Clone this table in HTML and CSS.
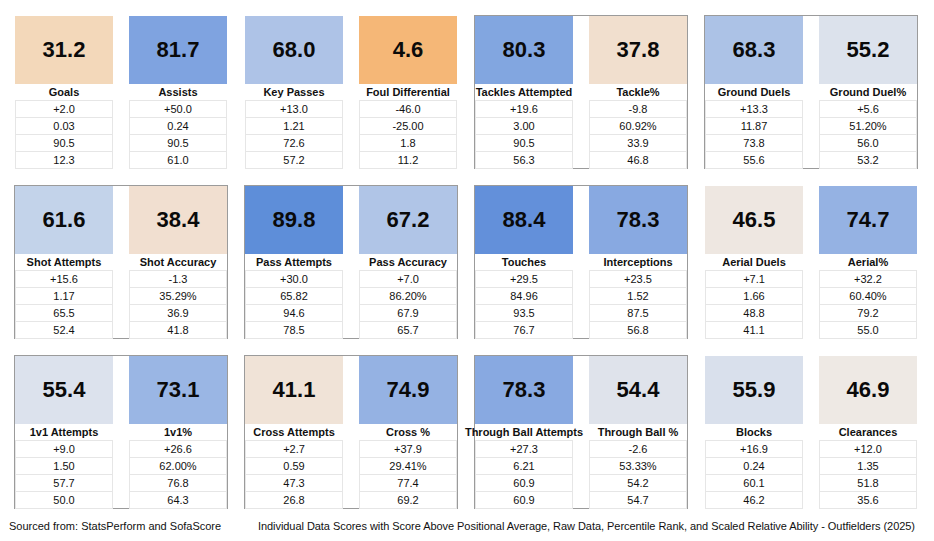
FILE: index.html
```html
<!DOCTYPE html>
<html>
<head>
<meta charset="utf-8">
<link rel="stylesheet" href="styles.css">
</head>
<body>
<div class="page">
  <div class="grid">
    <div class="group">
      <div class="stat"><div class="score c-3121">31.2</div><div class="label">Goals</div><div class="table"><div class="cell">+2.0</div><div class="cell">0.03</div><div class="cell">90.5</div><div class="cell">12.3</div></div></div>
      <div class="stat"><div class="score c-817">81.7</div><div class="label">Assists</div><div class="table"><div class="cell">+50.0</div><div class="cell">0.24</div><div class="cell">90.5</div><div class="cell">61.0</div></div></div>
    </div>
    <div class="group">
      <div class="stat"><div class="score c-680">68.0</div><div class="label">Key Passes</div><div class="table"><div class="cell">+13.0</div><div class="cell">1.21</div><div class="cell">72.6</div><div class="cell">57.2</div></div></div>
      <div class="stat"><div class="score c-46">4.6</div><div class="label">Foul Differential</div><div class="table"><div class="cell">-46.0</div><div class="cell">-25.00</div><div class="cell">1.8</div><div class="cell">11.2</div></div></div>
    </div>
    <div class="group framed">
      <div class="stat"><div class="score c-803">80.3</div><div class="label">Tackles Attempted</div><div class="table"><div class="cell">+19.6</div><div class="cell">3.00</div><div class="cell">90.5</div><div class="cell">56.3</div></div></div>
      <div class="stat"><div class="score c-378">37.8</div><div class="label">Tackle%</div><div class="table"><div class="cell">-9.8</div><div class="cell">60.92%</div><div class="cell">33.9</div><div class="cell">46.8</div></div></div>
    </div>
    <div class="group framed">
      <div class="stat"><div class="score c-683">68.3</div><div class="label">Ground Duels</div><div class="table"><div class="cell">+13.3</div><div class="cell">11.87</div><div class="cell">73.8</div><div class="cell">55.6</div></div></div>
      <div class="stat"><div class="score c-552">55.2</div><div class="label">Ground Duel%</div><div class="table"><div class="cell">+5.6</div><div class="cell">51.20%</div><div class="cell">56.0</div><div class="cell">53.2</div></div></div>
    </div>

    <div class="group framed">
      <div class="stat"><div class="score c-616">61.6</div><div class="label">Shot Attempts</div><div class="table"><div class="cell">+15.6</div><div class="cell">1.17</div><div class="cell">65.5</div><div class="cell">52.4</div></div></div>
      <div class="stat"><div class="score c-384">38.4</div><div class="label">Shot Accuracy</div><div class="table"><div class="cell">-1.3</div><div class="cell">35.29%</div><div class="cell">36.9</div><div class="cell">41.8</div></div></div>
    </div>
    <div class="group framed">
      <div class="stat"><div class="score c-898">89.8</div><div class="label">Pass Attempts</div><div class="table"><div class="cell">+30.0</div><div class="cell">65.82</div><div class="cell">94.6</div><div class="cell">78.5</div></div></div>
      <div class="stat"><div class="score c-672">67.2</div><div class="label">Pass Accuracy</div><div class="table"><div class="cell">+7.0</div><div class="cell">86.20%</div><div class="cell">67.9</div><div class="cell">65.7</div></div></div>
    </div>
    <div class="group framed">
      <div class="stat"><div class="score c-884">88.4</div><div class="label">Touches</div><div class="table"><div class="cell">+29.5</div><div class="cell">84.96</div><div class="cell">93.5</div><div class="cell">76.7</div></div></div>
      <div class="stat"><div class="score c-783">78.3</div><div class="label">Interceptions</div><div class="table"><div class="cell">+23.5</div><div class="cell">1.52</div><div class="cell">87.5</div><div class="cell">56.8</div></div></div>
    </div>
    <div class="group">
      <div class="stat"><div class="score c-465">46.5</div><div class="label">Aerial Duels</div><div class="table"><div class="cell">+7.1</div><div class="cell">1.66</div><div class="cell">48.8</div><div class="cell">41.1</div></div></div>
      <div class="stat"><div class="score c-747">74.7</div><div class="label">Aerial%</div><div class="table"><div class="cell">+32.2</div><div class="cell">60.40%</div><div class="cell">79.2</div><div class="cell">55.0</div></div></div>
    </div>

    <div class="group framed">
      <div class="stat"><div class="score c-554">55.4</div><div class="label">1v1 Attempts</div><div class="table"><div class="cell">+9.0</div><div class="cell">1.50</div><div class="cell">57.7</div><div class="cell">50.0</div></div></div>
      <div class="stat"><div class="score c-731">73.1</div><div class="label">1v1%</div><div class="table"><div class="cell">+26.6</div><div class="cell">62.00%</div><div class="cell">76.8</div><div class="cell">64.3</div></div></div>
    </div>
    <div class="group framed">
      <div class="stat"><div class="score c-411">41.1</div><div class="label">Cross Attempts</div><div class="table"><div class="cell">+2.7</div><div class="cell">0.59</div><div class="cell">47.3</div><div class="cell">26.8</div></div></div>
      <div class="stat"><div class="score c-749">74.9</div><div class="label">Cross %</div><div class="table"><div class="cell">+37.9</div><div class="cell">29.41%</div><div class="cell">77.4</div><div class="cell">69.2</div></div></div>
    </div>
    <div class="group framed">
      <div class="stat"><div class="score c-783">78.3</div><div class="label">Through Ball Attempts</div><div class="table"><div class="cell">+27.3</div><div class="cell">6.21</div><div class="cell">60.9</div><div class="cell">60.9</div></div></div>
      <div class="stat"><div class="score c-544">54.4</div><div class="label">Through Ball %</div><div class="table"><div class="cell">-2.6</div><div class="cell">53.33%</div><div class="cell">54.2</div><div class="cell">54.7</div></div></div>
    </div>
    <div class="group">
      <div class="stat"><div class="score c-559">55.9</div><div class="label">Blocks</div><div class="table"><div class="cell">+16.9</div><div class="cell">0.24</div><div class="cell">60.1</div><div class="cell">46.2</div></div></div>
      <div class="stat"><div class="score c-469">46.9</div><div class="label">Clearances</div><div class="table"><div class="cell">+12.0</div><div class="cell">1.35</div><div class="cell">51.8</div><div class="cell">35.6</div></div></div>
    </div>
  </div>
  <div class="footer">
    <span>Sourced from: StatsPerform and SofaScore</span>
    <span class="title">Individual Data Scores with Score Above Positional Average, Raw Data, Percentile Rank, and Scaled Relative Ability - Outfielders (2025)</span>
  </div>
</div>
</body>
</html>
```

FILE: styles.css
```css
html, body {
  margin: 0;
  padding: 0;
  background: #ffffff;
}
body {
  font-family: "Liberation Sans", Arial, sans-serif;
  color: #111111;
  width: 934px;
  height: 541px;
  overflow: hidden;
}
.page {
  padding: 15px 0 0 14px;
}
.grid {
  display: grid;
  grid-template-columns: repeat(4, 214px);
  grid-auto-rows: 154px;
  column-gap: 16px;
  row-gap: 16px;
}
.group {
  box-sizing: border-box;
  border: 1px solid transparent;
  display: grid;
  grid-template-columns: 98px 98px;
  column-gap: 16px;
}
.group.framed {
  border-color: #9b9b9b;
}
.stat {
  display: flex;
  flex-direction: column;
  min-width: 0;
}
.score {
  height: 68px;
  display: flex;
  align-items: center;
  justify-content: center;
  font-weight: bold;
  font-size: 22px;
  color: #0a0a0a;
}
.label {
  height: 16px;
  line-height: 16px;
  text-align: center;
  font-weight: bold;
  font-size: 11px;
  white-space: nowrap;
  display: flex;
  justify-content: center;
  overflow: visible;
}
.table {
  border-top: 1px solid #e6e6e6;
  border-left: 1px solid #e6e6e6;
  border-right: 1px solid #e6e6e6;
}
.cell {
  box-sizing: border-box;
  height: 17px;
  line-height: 16px;
  border-bottom: 1px solid #e6e6e6;
  text-align: center;
  font-size: 11px;
  color: #111111;
}
.footer {
  display: flex;
  justify-content: space-between;
  padding: 11px 19px 0 9px;
  margin-left: -14px;
  font-size: 11px;
  line-height: 13px;
  color: #111111;
}
.title {
  letter-spacing: -0.05px;
}

.c-3121 { background: #f3d8ba; }
.c-817 { background: #7fa3e0; }
.c-680 { background: #aec3e7; }
.c-46 { background: #f5b777; }
.c-803 { background: #82a6e0; }
.c-378 { background: #f1dfce; }
.c-683 { background: #acc2e6; }
.c-552 { background: #dce2ec; }
.c-616 { background: #c3d3ea; }
.c-384 { background: #f1dfd0; }
.c-898 { background: #5e8ed9; }
.c-672 { background: #b0c5e7; }
.c-884 { background: #6390da; }
.c-783 { background: #88a9e1; }
.c-465 { background: #eee7e1; }
.c-747 { background: #95b2e3; }
.c-554 { background: #dce2ed; }
.c-731 { background: #9ab6e4; }
.c-411 { background: #f0e3d7; }
.c-749 { background: #95b2e3; }
.c-544 { background: #dfe3eb; }
.c-559 { background: #d9e0ec; }
.c-469 { background: #eee9e4; }
```
